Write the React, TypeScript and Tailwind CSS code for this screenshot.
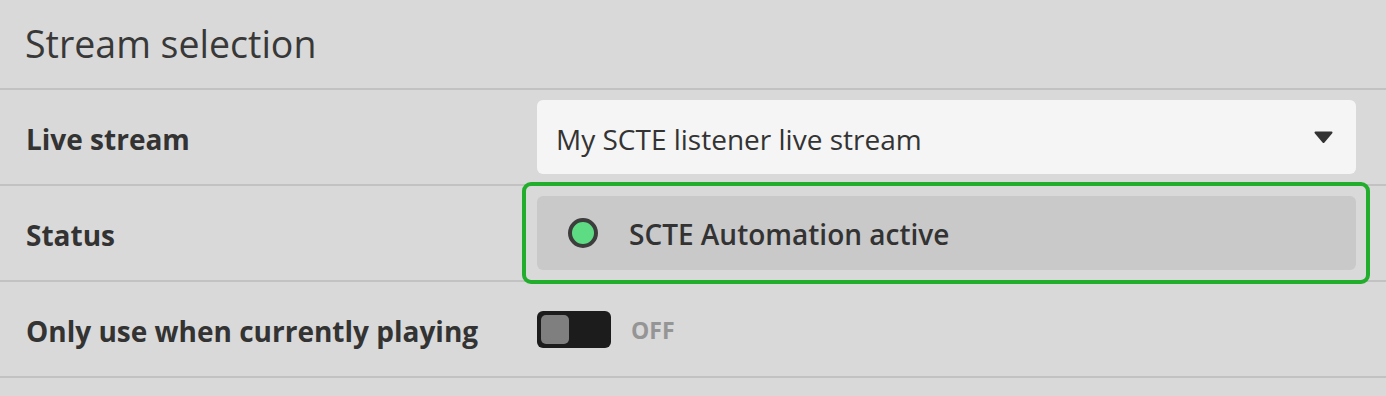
import { ReactNode } from "react";

function Row({ label, children }: { label: string; children: ReactNode }) {
    return (
        <div className="flex items-center h-[96px] border-b-2 border-[#c2c2c2]">
            <div className="w-[537px] shrink-0 pl-[26px] pt-[3px] text-[28px] font-bold text-[#333333]">{label}</div>
            <div className="flex-1 pr-[30px] flex items-center">{children}</div>
        </div>
    );
}

export default function App() {
    return (
        <main
            className="w-[1386px] h-[396px] bg-[#d9d9d9] overflow-hidden"
            style={{ fontFamily: '"Open Sans", "Noto Sans", sans-serif' }}
        >
            {/* Header */}
            <div className="h-[90px] flex items-center pl-[25px] border-b-2 border-[#c2c2c2]">
                <h1 className="text-[37.5px] text-[#383838] font-normal">Stream selection</h1>
            </div>

            {/* Live stream select */}
            <Row label="Live stream">
                <div className="w-full h-[74px] bg-[#f5f5f5] rounded-md flex items-center justify-between pl-[19px] pr-[23px]">
                    <span className="pt-[3px] text-[28px] text-[#333333]">My SCTE listener live stream</span>
                    <svg width="19" height="13" viewBox="0 0 19 13">
                        <path d="M1.5 1.5 H17.5 L9.5 11 Z" fill="#333333" stroke="#333333" strokeWidth="2" strokeLinejoin="round" />
                    </svg>
                </div>
            </Row>

            {/* Status */}
            <Row label="Status">
                <div className="relative w-full">
                    <div className="h-[74px] bg-[#c9c9c9] rounded-md flex items-center pl-[31px]">
                        <span className="w-[30px] h-[30px] rounded-full bg-[#5ddc83] border-[4px] border-[#3d3d3d]" />
                        <span className="ml-[31px] pt-[2px] text-[28px] font-semibold text-[#333333]">SCTE Automation active</span>
                    </div>
                    <div className="absolute -left-[15px] -right-[14px] -top-[14px] -bottom-[14px] border-[4px] border-[#22ae2c] rounded-[9px] pointer-events-none" />
                </div>
            </Row>

            {/* Toggle */}
            <Row label="Only use when currently playing">
                <div className="flex items-center gap-[20px]">
                    <div className="w-[74px] h-[37px] bg-[#1c1c1c] rounded-md p-[4px] flex">
                        <div className="w-[28px] h-[29px] bg-[#7f7f7f] rounded-[5px]" />
                    </div>
                    <span className="pt-[2px] text-[23px] font-bold text-[#959595]">OFF</span>
                </div>
            </Row>
        </main>
    );
}
